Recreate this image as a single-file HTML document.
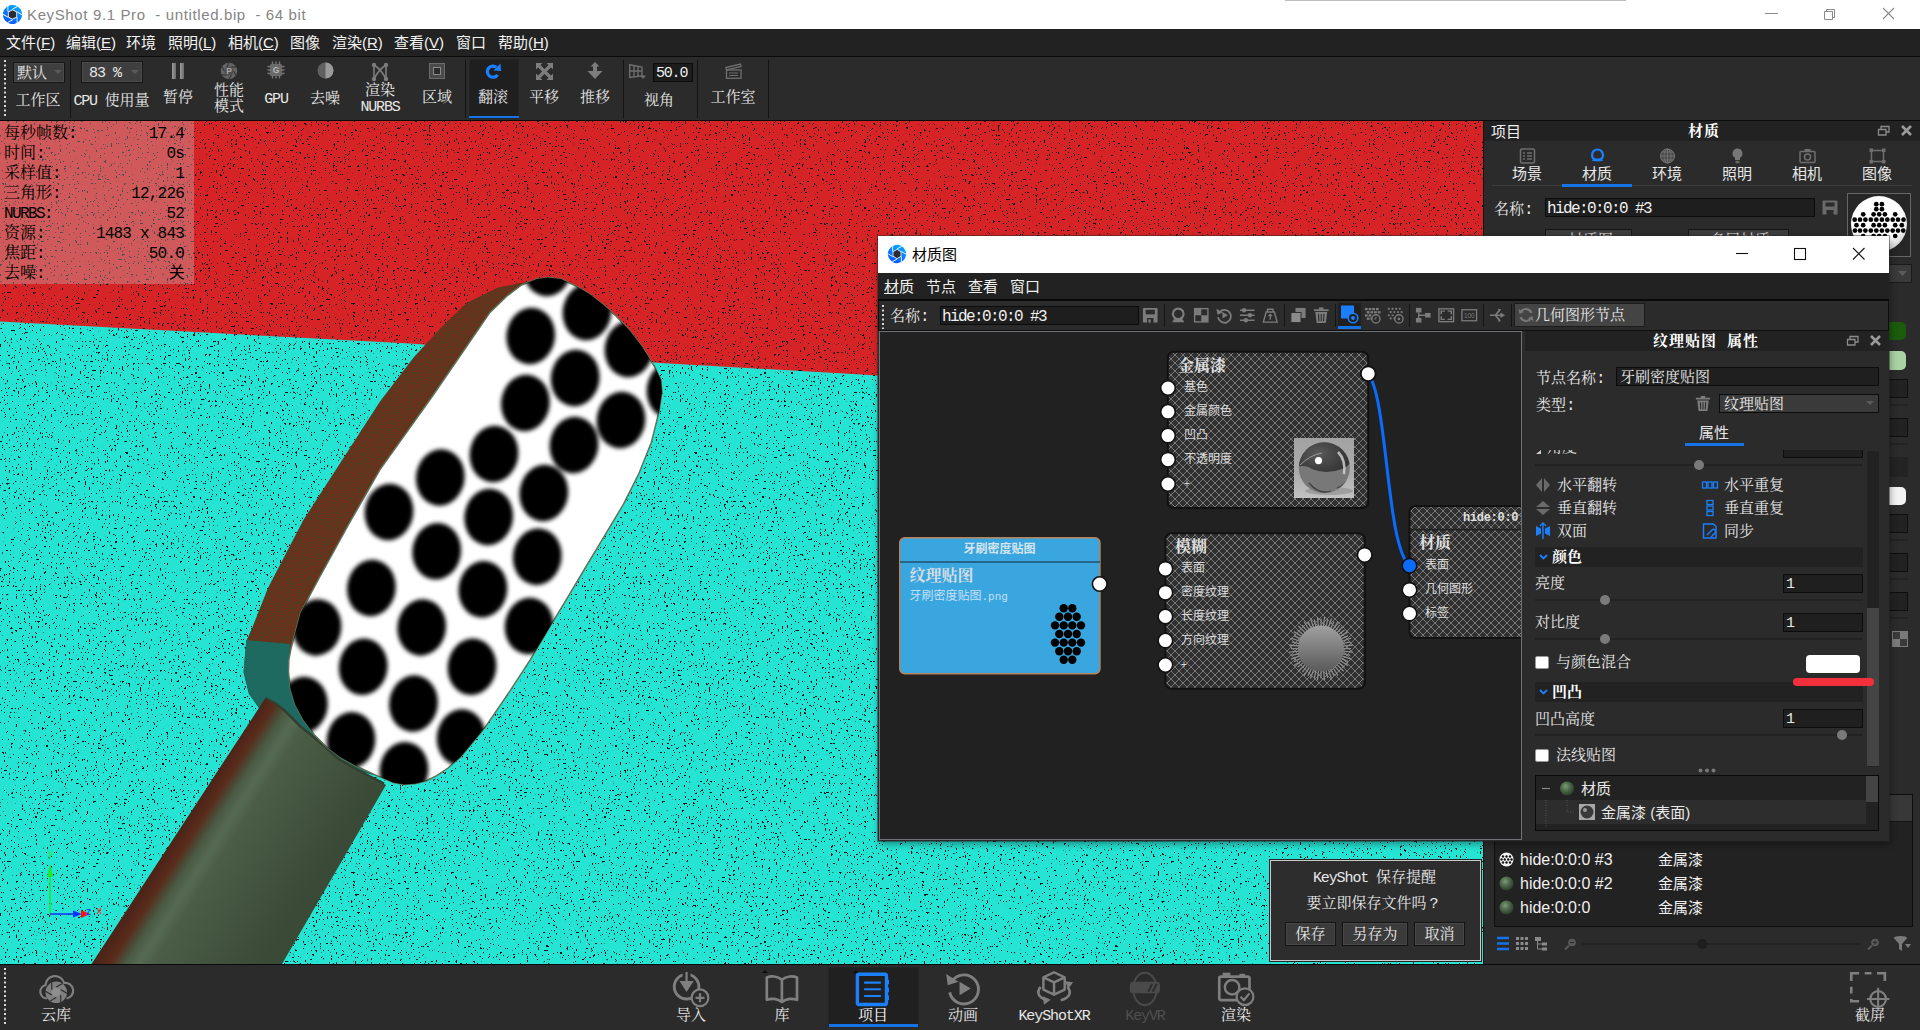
<!DOCTYPE html>
<html lang="zh-CN">
<head>
<meta charset="utf-8">
<title>KeyShot 9.1 Pro - untitled.bip - 64 bit</title>
<style>
*{box-sizing:border-box;margin:0;padding:0}
html,body{width:1920px;height:1030px;overflow:hidden;background:#2b2b2b}
body{position:relative;font-family:"Liberation Sans","Noto Sans CJK SC",sans-serif;font-size:15px;color:#e6e6e6;line-height:1}
.abs{position:absolute}
.ss{font-family:"Liberation Mono","Noto Serif CJK SC",serif}
.yh{font-family:"Liberation Sans","Noto Sans CJK SC",sans-serif}
.t{position:absolute;white-space:pre;line-height:1}
.t.ss{margin-top:2px}
.t.mono{margin-top:1px}
.mono{font-family:"Liberation Mono","Noto Sans CJK SC",monospace;letter-spacing:-1.6px;font-size:16px}
svg{position:absolute;overflow:visible}
/* title bar */
#titlebar{left:0;top:0;width:1920px;height:29px;background:#fff}
#menubar{left:0;top:29px;width:1920px;height:27px;background:#222}
#menubar .t{top:6px;font-size:15px;color:#f2f2f2}
#toolbar{left:0;top:56px;width:1920px;height:65px;background:#2b2b2b;border-top:1px solid #0a0a0a;border-bottom:1px solid #0a0a0a}
.tsep{position:absolute;width:1px;background:#141414;top:3px;height:58px}
.tlbl{position:absolute;margin-top:2px;font-size:15px;color:#e8e8e8;white-space:pre;line-height:16px;text-align:center;transform:translateX(-50%)}
.combo{position:absolute;background:#3f3f3f;border:1px solid #161616;box-shadow:inset 0 0 0 1px #4a4a4a}
/* viewport */
#viewport{left:0;top:121px;width:1483px;height:843px;background:#25e3d3;overflow:hidden}
</style>
</head>
<body>
<!-- ===== TITLE BAR ===== -->
<div id="titlebar" class="abs">
  <svg style="left:1.500px;top:3.500px" width="21" height="21" viewBox="0 0 21 21"><defs><linearGradient id="lgva" x1="0" y1="0" x2="0" y2="1"><stop offset="0" stop-color="#08a6ff"/><stop offset="1" stop-color="#0458ff"/></linearGradient></defs><defs><radialGradient id="lg1"><stop offset="0" stop-color="#08a6ff"/></radialGradient></defs><g transform="translate(10.5 10.5) rotate(30)"><circle r="9.6" fill="url(#lgva)"/><polygon points="5.30,0.00 2.65,4.59 -2.65,4.59 -5.30,0.00 -2.65,-4.59 2.65,-4.59" fill="#f4f8ff"/><path d="M5.30 0.00L8.19 5.01M2.65 4.59L-0.24 9.60M-2.65 4.59L-8.43 4.59M-5.30 0.00L-8.19 -5.01M-2.65 -4.59L0.24 -9.60M2.65 -4.59L8.43 -4.59" stroke="#f4f8ff" stroke-width="0.9" fill="none"/><polygon points="4.35,0.00 2.17,3.76 -2.17,3.76 -4.35,0.00 -2.17,-3.76 2.17,-3.76" fill="#2c2c30"/></g></svg>
  <div class="t" style="left:27px;top:7px;font-size:15px;color:#858585;letter-spacing:0.63px">KeyShot 9.1 Pro  - untitled.bip  - 64 bit</div>
  <div class="abs" style="left:1285px;top:0;width:341px;height:1px;background:#bdbdbd"></div>
  <svg style="left:1760px;top:4px" width="150" height="22" viewBox="0 0 150 22" fill="none" stroke="#8a8a8a" stroke-width="1">
    <path d="M5 9.5H18"/>
    <path d="M64.5 7.5h8v8h-8z M66.5 7.5v-2h8v8h-2"/>
    <path d="M123 4L134 15M134 4L123 15" stroke-width="1.1"/>
  </svg>
</div>

<!-- ===== MENU BAR ===== -->
<div id="menubar" class="abs">
  <div class="t" style="left:6px">文件(<u>F</u>)</div>
  <div class="t" style="left:66px">编辑(<u>E</u>)</div>
  <div class="t" style="left:126px">环境</div>
  <div class="t" style="left:168px">照明(<u>L</u>)</div>
  <div class="t" style="left:228px">相机(<u>C</u>)</div>
  <div class="t" style="left:290px">图像</div>
  <div class="t" style="left:332px">渲染(<u>R</u>)</div>
  <div class="t" style="left:394px">查看(<u>V</u>)</div>
  <div class="t" style="left:456px">窗口</div>
  <div class="t" style="left:498px">帮助(<u>H</u>)</div>
</div>

<!-- ===== MAIN TOOLBAR ===== -->
<div id="toolbar" class="abs">

  <svg style="left:3px;top:3px" width="4" height="58"><line x1="2" y1="0" x2="2" y2="58" stroke="#d8d8d8" stroke-width="2" stroke-dasharray="2 2.5"/></svg>
  <div class="combo" style="left:13px;top:5px;width:52px;height:21px"></div>
  <div class="t ss" style="left:17px;top:8px;font-size:15px;color:#e8e8e8">默认</div>
  <svg style="left:54px;top:13px" width="8" height="5"><path d="M0 0h8l-4 4z" fill="#5a5a5a"/></svg>
  <div class="tlbl ss" style="left:38px;top:35px">工作区</div>
  <div class="tsep" style="left:70px"></div>
  <div class="combo" style="left:81px;top:4px;width:62px;height:22px"></div>
  <div class="t mono" style="left:89px;top:8px;font-size:15px;letter-spacing:-1px;color:#e8e8e8">83 %</div>
  <svg style="left:131px;top:13px" width="8" height="5"><path d="M0 0h8l-4 4z" fill="#5a5a5a"/></svg>
  <div class="tlbl ss" style="left:111.5px;top:35px"><span class="mono" style="font-size:15px;letter-spacing:-1.2px">CPU </span>使用量</div>

  <svg style="left:172px;top:6px" width="13" height="17"><defs><linearGradient id="gp" x1="0" x2="1"><stop offset="0" stop-color="#9a9a9a"/><stop offset="1" stop-color="#6a6a6a"/></linearGradient></defs><rect x="0" y="0" width="4" height="16" fill="url(#gp)"/><rect x="8" y="0" width="4" height="16" fill="url(#gp)"/></svg>
  <div class="tlbl ss" style="left:178px;top:32px">暂停</div>

  <svg style="left:220px;top:5px" width="18" height="18" viewBox="0 0 18 18"><circle cx="9" cy="9" r="8.3" fill="#646464"/><path d="M13.60 9.00L16.09 13.31M11.30 12.98L8.81 17.30M6.70 12.98L1.72 12.98M4.40 9.00L1.91 4.69M6.70 5.02L9.19 0.70M11.30 5.02L16.28 5.02" stroke="#2b2b2b" stroke-width="1" fill="none"/><circle cx="9" cy="9" r="4.600" fill="#4e4e4e"/><text x="9" y="12.300" font-size="8.500" font-weight="bold" text-anchor="middle" fill="#a8a8a8" font-family="Liberation Sans,sans-serif">P</text></svg>
  <div class="tlbl ss" style="left:229px;top:25px">性能<br>模式</div>

  <svg style="left:267px;top:4px" width="18" height="18" viewBox="0 0 18 18"><rect x="3" y="3" width="12" height="12" rx="1.500" fill="#6a6a6a"/><path d="M5.5 0.5v3M9 0.5v3M12.500 0.5v3M5.5 14.500v3M9 14.500v3M12.500 14.500v3M0.5 5.5h3M0.5 9h3M0.5 12.500h3M14.500 5.500h3M14.500 9h3M14.500 12.500h3" stroke="#777" stroke-width="1.4"/><text x="9" y="12.300" font-size="8.500" font-weight="bold" text-anchor="middle" fill="#b4b4b4" font-family="Liberation Sans,sans-serif">G</text></svg>
  <div class="tlbl mono" style="left:276px;top:33px;font-size:15px;letter-spacing:-1.2px">GPU</div>

  <svg style="left:317px;top:5px" width="17" height="17" viewBox="0 0 17 17"><circle cx="8.500" cy="8.500" r="8" fill="#606060"/><path d="M8.500 0.500a8 8 0 0 1 0 16z" fill="#9a9a9a"/></svg>
  <div class="tlbl ss" style="left:325px;top:33px">去噪</div>

  <svg style="left:371px;top:5px" width="18" height="20" viewBox="0 0 18 20" fill="none" stroke="#7d7d7d" stroke-width="1.6"><path d="M3 3v14M15 3v14M3 3c5 3 10 10 12 14M15 3c-5 3 -10 10 -12 14"/><g fill="#7d7d7d" stroke="none"><circle cx="3" cy="3" r="2.200"/><circle cx="15" cy="3" r="2.200"/><circle cx="3" cy="17" r="2.200"/><circle cx="15" cy="17" r="2.200"/></g></svg>
  <div class="tlbl ss" style="left:380px;top:25px">渲染<br><span class="mono" style="font-size:15px;letter-spacing:-1.2px">NURBS</span></div>

  <svg style="left:429px;top:6px" width="16" height="16" viewBox="0 0 16 16"><rect x="0.500" y="0.500" width="15" height="15" fill="#4a4a4a" stroke="#6a6a6a"/><rect x="4.500" y="4.500" width="7" height="7" fill="#2b2b2b" stroke="#8a8a8a"/></svg>
  <div class="tlbl ss" style="left:437px;top:32px">区域</div>

  <div class="tsep" style="left:465px"></div>
  <div class="abs" style="left:469px;top:2px;width:50px;height:60px;background:#1f1f1f;border:1px solid #242424"></div>
  <div class="abs" style="left:469px;top:59px;width:50px;height:2px;background:#1473e6"></div>
  <svg style="left:484px;top:6px" width="18" height="18" viewBox="0 0 18 18"><path d="M13.600 11.800A5.600 5.600 0 1 1 12.400 4.200" fill="none" stroke="#1a80ff" stroke-width="3.200"/><path d="M9.500 7.500l7.500 0.500l-0.500-7.500z" fill="#1a80ff"/></svg>
  <div class="tlbl ss" style="left:493px;top:32px">翻滚</div>

  <svg style="left:536px;top:6px" width="17" height="17" viewBox="0 0 17 17"><path d="M3 3L14 14M14 3L3 14" stroke="#7d7d7d" stroke-width="3.200"/><path d="M0 0h6.500L0 6.500zM17 0h-6.500L17 6.500zM0 17h6.500L0 10.500zM17 17h-6.500L17 10.500z" fill="#7d7d7d"/></svg>
  <div class="tlbl ss" style="left:544px;top:32px">平移</div>

  <svg style="left:586px;top:5px" width="18" height="18" viewBox="0 0 18 18"><path d="M9 0L13.500 4.500H11V9h5.500L9 17L1.500 9H7V4.500H4.500z" fill="#7d7d7d"/></svg>
  <div class="tlbl ss" style="left:595px;top:32px">推移</div>

  <div class="tsep" style="left:623px"></div>
  <svg style="left:629px;top:7px" width="17" height="15" viewBox="0 0 17 15" fill="none" stroke="#6e6e6e" stroke-width="1.400"><path d="M0.700 0.700L13 3V12L0.700 13.500zM0.700 7H13M5 1.500V13M9 2.300V12.500"/><path d="M11 11.500h6l-3 3.500z" fill="#6e6e6e" stroke="none"/></svg>
  <div class="abs" style="left:653px;top:6px;width:40px;height:19px;background:#1c1c1c;border:1px solid #0c0c0c"></div>
  <div class="t mono" style="left:656px;top:8px;font-size:15px;letter-spacing:-1.200px;color:#f0f0f0">50.0</div>
  <div class="tlbl ss" style="left:659px;top:35px">视角</div>
  <div class="tsep" style="left:697px"></div>

  <svg style="left:725px;top:6px" width="17" height="16" viewBox="0 0 17 16" fill="none" stroke="#6e6e6e" stroke-width="1.300"><path d="M1 4.500L15.500 1L16 3.500L1.500 7z"/><rect x="1.500" y="7" width="14.500" height="8.300"/><path d="M4 10h9M4 12.500h9" stroke-width="1"/></svg>
  <div class="tlbl ss" style="left:733px;top:32px">工作室</div>
  <div class="tsep" style="left:768px"></div>

</div>

<!-- ===== VIEWPORT ===== -->
<div id="viewport" class="abs">

<svg style="left:0;top:0" width="1483" height="843" viewBox="0 0 1483 843">
 <defs>
  <filter id="noise" x="0" y="0" width="100%" height="100%" color-interpolation-filters="sRGB">
   <feTurbulence type="fractalNoise" baseFrequency="0.45" numOctaves="2" seed="7" result="n"/>
   <feColorMatrix in="n" type="matrix" values="0 0 0 0 0.06  0 0 0 0 0.08  0 0 0 0 0.08  0 0 0 -34 10.5"/>
  </filter>
  <filter id="noise2" x="0" y="0" width="100%" height="100%" color-interpolation-filters="sRGB">
   <feTurbulence type="fractalNoise" baseFrequency="0.8" numOctaves="1" seed="3" result="n"/>
   <feColorMatrix in="n" type="matrix" values="0 0 0 0 0.15  0 0 0 0 0.32  0 0 0 0 0.12  0 0 0 -20 9.2"/>
  </filter>
  <filter id="blur2"><feGaussianBlur stdDeviation="2.1"/></filter>
  <clipPath id="faceclip"><polygon points="521.5,164.0 537.0,158.0 548.0,156.5 561.0,158.0 575.0,164.5 589.6,173.0 603.0,183.5 616.0,195.0 630.0,210.0 642.0,225.5 655.0,246.4 661.0,259.0 662.0,271.0 659.2,290.0 651.4,321.2 639.0,352.3 623.4,383.3 604.8,414.4 586.1,445.5 567.5,476.6 548.8,507.7 530.2,538.8 510.0,569.9 485.6,605.7 461.0,635.6 448.0,647.0 436.7,654.6 426.0,660.0 415.0,662.8 404.0,663.5 393.0,661.4 376.8,654.6 357.0,645.5 340.0,636.0 326.0,625.5 314.3,613.8 303.5,599.0 295.3,584.0 290.5,568.0 288.5,551.3 288.8,539.0 291.2,526.8 300.7,491.5 319.7,456.0 349.6,401.7 380.0,348.6 432.4,275.3 490.0,191.4 507.0,175.0"/></clipPath>
  <clipPath id="sideclip"><polygon points="548.0,156.5 498.0,166.5 466.5,182.0 443.0,204.5 414.0,236.0 380.0,280.5 303.4,399.0 268.0,467.0 251.8,507.8 246.3,520.0 243.6,551.3 249.0,573.0 262.0,591.0 300.0,624.0 340.0,644.0 376.8,654.6 340.0,636.0 314.3,613.8 295.3,584.0 288.5,551.3 291.2,526.8 300.7,491.5 319.7,456.0 349.6,401.7 380.0,348.6 432.4,275.3 490.0,191.4 521.5,164.0"/></clipPath>
  <linearGradient id="handleg" gradientUnits="userSpaceOnUse" x1="180.700" y1="711" x2="298.700" y2="786">
   <stop offset="0" stop-color="#4d2418"/><stop offset="0.08" stop-color="#5a2c1c"/><stop offset="0.13" stop-color="#4c4632"/><stop offset="0.17" stop-color="#4a5a44"/><stop offset="0.25" stop-color="#566a52"/><stop offset="0.34" stop-color="#4c5d47"/><stop offset="0.6" stop-color="#445540"/><stop offset="1" stop-color="#3b4937"/>
  </linearGradient>
 </defs>
 <!-- background planes -->
 <rect x="0" y="0" width="1483" height="843" fill="#26e4d4"/>
 <polygon points="0,0 1483,0 1483,290 878,254.500 660,242 410,222.500 0,200.500" fill="#d62426"/>
 <rect x="0" y="0" width="1483" height="843" filter="url(#noise)"/>
 <!-- head side -->
 <polygon points="548.0,156.5 498.0,166.5 466.5,182.0 443.0,204.5 414.0,236.0 380.0,280.5 303.4,399.0 268.0,467.0 251.8,507.8 246.3,520.0 243.6,551.3 249.0,573.0 262.0,591.0 300.0,624.0 340.0,644.0 376.8,654.6 340.0,636.0 314.3,613.8 295.3,584.0 288.5,551.3 291.2,526.8 300.7,491.5 319.7,456.0 349.6,401.7 380.0,348.6 432.4,275.3 490.0,191.4 521.5,164.0" fill="#6e301d"/>
 <g clip-path="url(#sideclip)"><rect x="230" y="150" width="330" height="520" filter="url(#noise2)" opacity="0.55"/></g>
 <polygon points="246.3,519.0 290.0,523.0 288.5,551.3 295.3,584.0 314.3,613.8 340.0,636.0 376.8,654.6 340.0,647.0 300.0,626.0 262.0,591.0 249.0,573.0 243.6,551.3" fill="#1f6a60"/>
 <!-- handle -->
 <polygon points="265.4,577 275,582 284.4,589.3 300.7,605.7 314.3,616.5 338.8,638.3 360.5,650.5 382.3,661.4 386,664 282,843 91.500,843" fill="url(#handleg)"/>
 <path d="M265.4 577L275 582L284.4 589.3L300.7 605.7L314.3 616.5L338.8 638.3L360.5 650.5L384 662.500" fill="none" stroke="#33402f" stroke-width="2.500"/>
 <!-- face -->
 <polygon points="521.5,164.0 537.0,158.0 548.0,156.5 561.0,158.0 575.0,164.5 589.6,173.0 603.0,183.5 616.0,195.0 630.0,210.0 642.0,225.5 655.0,246.4 661.0,259.0 662.0,271.0 659.2,290.0 651.4,321.2 639.0,352.3 623.4,383.3 604.8,414.4 586.1,445.5 567.5,476.6 548.8,507.7 530.2,538.8 510.0,569.9 485.6,605.7 461.0,635.6 448.0,647.0 436.7,654.6 426.0,660.0 415.0,662.8 404.0,663.5 393.0,661.4 376.8,654.6 357.0,645.5 340.0,636.0 326.0,625.5 314.3,613.8 303.5,599.0 295.3,584.0 290.5,568.0 288.5,551.3 288.8,539.0 291.2,526.8 300.7,491.5 319.7,456.0 349.6,401.7 380.0,348.6 432.4,275.3 490.0,191.4 507.0,175.0" fill="#ffffff" stroke="#5d735a" stroke-width="1.500" stroke-linejoin="round"/>
 <g clip-path="url(#faceclip)"><g filter="url(#blur2)" fill="#000">
 <ellipse cx="547.7" cy="147.0" rx="24.3" ry="28.3" transform="rotate(8 547.7 147.0)"/>
<ellipse cx="587.0" cy="191.0" rx="24.3" ry="28.3" transform="rotate(8 587.0 191.0)"/>
<ellipse cx="530.7" cy="215.0" rx="24.3" ry="28.3" transform="rotate(8 530.7 215.0)"/>
<ellipse cx="629.0" cy="228.0" rx="24.3" ry="28.3" transform="rotate(8 629.0 228.0)"/>
<ellipse cx="575.2" cy="257.0" rx="24.3" ry="28.3" transform="rotate(8 575.2 257.0)"/>
<ellipse cx="671.0" cy="269.0" rx="24.3" ry="28.3" transform="rotate(8 671.0 269.0)"/>
<ellipse cx="525.4" cy="282.0" rx="24.3" ry="28.3" transform="rotate(8 525.4 282.0)"/>
<ellipse cx="621.0" cy="299.0" rx="24.3" ry="28.3" transform="rotate(8 621.0 299.0)"/>
<ellipse cx="574.0" cy="324.0" rx="24.3" ry="28.3" transform="rotate(8 574.0 324.0)"/>
<ellipse cx="494.0" cy="333.0" rx="24.3" ry="28.3" transform="rotate(8 494.0 333.0)"/>
<ellipse cx="440.3" cy="356.5" rx="24.3" ry="28.3" transform="rotate(8 440.3 356.5)"/>
<ellipse cx="543.8" cy="372.0" rx="24.3" ry="28.3" transform="rotate(8 543.8 372.0)"/>
<ellipse cx="488.7" cy="396.0" rx="24.3" ry="28.3" transform="rotate(8 488.7 396.0)"/>
<ellipse cx="389.0" cy="391.0" rx="24.3" ry="28.3" transform="rotate(8 389.0 391.0)"/>
<ellipse cx="436.7" cy="430.3" rx="24.3" ry="28.3" transform="rotate(8 436.7 430.3)"/>
<ellipse cx="537.3" cy="435.7" rx="24.3" ry="28.3" transform="rotate(8 537.3 435.7)"/>
<ellipse cx="371.4" cy="467.0" rx="24.3" ry="28.3" transform="rotate(8 371.4 467.0)"/>
<ellipse cx="482.9" cy="468.3" rx="24.3" ry="28.3" transform="rotate(8 482.9 468.3)"/>
<ellipse cx="317.0" cy="506.4" rx="24.3" ry="28.3" transform="rotate(8 317.0 506.4)"/>
<ellipse cx="421.7" cy="506.4" rx="24.3" ry="28.3" transform="rotate(8 421.7 506.4)"/>
<ellipse cx="529.1" cy="505.0" rx="24.3" ry="28.3" transform="rotate(8 529.1 505.0)"/>
<ellipse cx="363.2" cy="545.8" rx="24.3" ry="28.3" transform="rotate(8 363.2 545.8)"/>
<ellipse cx="472.0" cy="545.8" rx="24.3" ry="28.3" transform="rotate(8 472.0 545.8)"/>
<ellipse cx="303.4" cy="584.0" rx="24.3" ry="28.3" transform="rotate(8 303.4 584.0)"/>
<ellipse cx="413.5" cy="582.5" rx="24.3" ry="28.3" transform="rotate(8 413.5 582.5)"/>
<ellipse cx="351.0" cy="619.3" rx="24.3" ry="28.3" transform="rotate(8 351.0 619.3)"/>
<ellipse cx="461.1" cy="616.5" rx="24.3" ry="28.3" transform="rotate(8 461.1 616.5)"/>
<ellipse cx="404.0" cy="649.2" rx="24.3" ry="28.3" transform="rotate(8 404.0 649.2)"/>
 </g></g>
</svg>

<div class="abs" style="left:0;top:0;width:194px;height:163px;background:rgba(195,205,205,0.32)"></div>
<div class="t ss" style="left:4px;top:3px;font-size:16px;color:#000">每秒帧数<span class="mono">:</span></div><div class="t mono ss" style="right:1299px;top:4px;letter-spacing:-0.8px;color:#000">17.4</div>
<div class="t ss" style="left:4px;top:23px;font-size:16px;color:#000">时间<span class="mono">:</span></div><div class="t mono ss" style="right:1299px;top:24px;letter-spacing:-0.8px;color:#000">0s</div>
<div class="t ss" style="left:4px;top:43px;font-size:16px;color:#000">采样值<span class="mono">:</span></div><div class="t mono ss" style="right:1299px;top:44px;letter-spacing:-0.8px;color:#000">1</div>
<div class="t ss" style="left:4px;top:63px;font-size:16px;color:#000">三角形<span class="mono">:</span></div><div class="t mono ss" style="right:1299px;top:64px;letter-spacing:-0.8px;color:#000">12,226</div>
<div class="t ss" style="left:4px;top:83px;font-size:16px;color:#000"><span class="mono">NURBS:</span></div><div class="t mono ss" style="right:1299px;top:84px;letter-spacing:-0.8px;color:#000">52</div>
<div class="t ss" style="left:4px;top:103px;font-size:16px;color:#000">资源<span class="mono">:</span></div><div class="t mono ss" style="right:1299px;top:104px;letter-spacing:-0.8px;color:#000">1483 x 843</div>
<div class="t ss" style="left:4px;top:123px;font-size:16px;color:#000">焦距<span class="mono">:</span></div><div class="t mono ss" style="right:1299px;top:124px;letter-spacing:-0.8px;color:#000">50.0</div>
<div class="t ss" style="left:4px;top:143px;font-size:16px;color:#000">去噪<span class="mono">:</span></div><div class="t mono ss" style="right:1299px;top:144px;letter-spacing:-0.8px;color:#000">关</div>

<svg style="left:40px;top:725px" width="70" height="80" viewBox="40 725 70 80">
 <path d="M50 793V755" stroke="#22e822" stroke-width="1.500"/><path d="M50 743l-3 13h6z" fill="#22e822"/>
 <path d="M50 793H76" stroke="#1030ff" stroke-width="1.500"/><path d="M82 793l-9-3.500v7z" fill="#1030ff"/><path d="M90 793l-9-4v8z" fill="#ff1010"/>
 <text x="48" y="736" font-size="10" fill="#22e822" font-family="Liberation Sans,sans-serif">y</text>
 <text x="86" y="794" font-size="10" fill="#1030ff" font-family="Liberation Sans,sans-serif">z</text>
 <text x="96.500" y="793" font-size="11" fill="#ff2020" font-family="Liberation Sans,sans-serif">x</text>
</svg>

</div>


<div id="rpanel" class="abs" style="left:1483px;top:121px;width:437px;height:843px;background:#2b2b2b;border-left:1px solid #111;overflow:hidden">
  <div class="abs" style="left:0;top:0;width:437px;height:20px;background:#222"></div>
  <div class="t yh" style="left:7px;top:3px;font-size:15px;color:#f0f0f0">项目</div>
  <div class="t ss" style="left:204px;top:2px;font-size:15px;font-weight:bold;color:#fff;letter-spacing:1px">材质</div>
  <svg style="left:393px;top:3px" width="38" height="14" viewBox="0 0 38 14"><path d="M1.500 5.500h7.500v5.500h-7.500zM4 5V2.500h8v5.500h-2.500" fill="none" stroke="#8a8a8a" stroke-width="1.300"/><path d="M25 2l9 9M34 2l-9 9" stroke="#9a9a9a" stroke-width="2.600"/></svg>
  <svg style="left:34.5px;top:27px" width="17" height="16" viewBox="0 0 17 16"><rect x="1.500" y="1" width="14" height="14" rx="1.500" fill="none" stroke="#6f6f6f" stroke-width="1.500"/><path d="M4 5h2M8 5h5M4 8h2M8 8h5M4 11h2M8 11h5" stroke="#6f6f6f" stroke-width="1.500"/></svg><div class="t yh" style="left:28px;top:45px;font-size:15px;color:#e8e8e8">场景</div>
<svg style="left:104.5px;top:27px" width="17" height="16" viewBox="0 0 17 16"><circle cx="8.500" cy="7" r="5.500" fill="none" stroke="#1a80ff" stroke-width="2.200"/><path d="M3 13q1-3 3-2.500h5q2-0.500 3 2.500z" fill="#1a80ff"/></svg><div class="t yh" style="left:98px;top:45px;font-size:15px;color:#e8e8e8">材质</div>
<svg style="left:174.5px;top:27px" width="17" height="16" viewBox="0 0 17 16"><circle cx="8.500" cy="8" r="7" fill="#4a4a4a" stroke="#777" stroke-width="1"/><path d="M1.500 8h14M8.500 1v14M3 4h11M3 12h11" stroke="#777" stroke-width="0.800" fill="none"/><ellipse cx="8.500" cy="8" rx="3.500" ry="7" fill="none" stroke="#777" stroke-width="0.800"/></svg><div class="t yh" style="left:168px;top:45px;font-size:15px;color:#e8e8e8">环境</div>
<svg style="left:244.5px;top:27px" width="17" height="16" viewBox="0 0 17 16"><path d="M8.500 0.500a5 5 0 0 1 2.500 9.300V12h-5V9.800A5 5 0 0 1 8.500 0.500z" fill="#777"/><rect x="6.500" y="12.800" width="4" height="2.500" fill="#666"/></svg><div class="t yh" style="left:238px;top:45px;font-size:15px;color:#e8e8e8">照明</div>
<svg style="left:314.5px;top:27px" width="17" height="16" viewBox="0 0 17 16"><rect x="1" y="3.500" width="15" height="11" rx="1" fill="none" stroke="#6f6f6f" stroke-width="1.500"/><rect x="5.500" y="1" width="6" height="2.500" fill="#6f6f6f"/><circle cx="8.500" cy="9" r="3" fill="none" stroke="#6f6f6f" stroke-width="1.500"/></svg><div class="t yh" style="left:308px;top:45px;font-size:15px;color:#e8e8e8">相机</div>
<svg style="left:384.5px;top:27px" width="17" height="16" viewBox="0 0 17 16"><rect x="2.500" y="2.500" width="12" height="11" fill="none" stroke="#6f6f6f" stroke-width="1.500"/><g fill="#6f6f6f"><rect x="0.500" y="0.500" width="3.500" height="3.500"/><rect x="13" y="0.500" width="3.500" height="3.500"/><rect x="0.500" y="12" width="3.500" height="3.500"/><rect x="13" y="12" width="3.500" height="3.500"/></g></svg><div class="t yh" style="left:378px;top:45px;font-size:15px;color:#e8e8e8">图像</div>

  <div class="abs" style="left:8px;top:64px;width:420px;height:1px;background:#3c3c3c"></div>
  <div class="abs" style="left:78px;top:63px;width:70px;height:3px;background:#1473e6"></div>
  <div class="t ss" style="left:10px;top:79px;font-size:15px;color:#e8e8e8">名称<span class="mono">:</span></div>
  <div class="abs" style="left:61px;top:77px;width:270px;height:19px;background:#1e1e1e;border:1px solid #0c0c0c"></div>
  <div class="t mono" style="left:63px;top:79px;color:#f0f0f0">hide:0:0:0 #3</div>
  <svg style="left:338px;top:79px" width="16" height="15" viewBox="0 0 16 15"><path d="M1.500 0.500h13a1 1 0 0 1 1 1V14.500h-4V10H4.500v4.500h-4V1.500a1 1 0 0 1 1-1z" fill="#6a6a6a"/><rect x="3.500" y="2.500" width="9" height="4" fill="#2b2b2b"/></svg>
  <div class="abs" style="left:363px;top:72px;width:64px;height:64px;background:#262626;border:1px solid #666"></div>
  <svg style="left:365.800px;top:73.800px" width="58" height="58" viewBox="-29 -29 58 58"><defs><clipPath id="sphc"><circle r="28"/></clipPath><radialGradient id="sphg" cx="0.450" cy="0.400" r="0.650"><stop offset="0.700" stop-color="#fff"/><stop offset="1" stop-color="#c8c8c8"/></radialGradient></defs><circle r="28" fill="url(#sphg)"/><g clip-path="url(#sphc)" fill="#000"><circle cx="-2.7" cy="-19.8" r="2.350"/><circle cx="2.9" cy="-19.8" r="2.350"/><circle cx="-2.7" cy="-14.8" r="2.350"/><circle cx="2.9" cy="-14.8" r="2.350"/><circle cx="-15.8" cy="-9.7" r="2.350"/><circle cx="-5.4" cy="-9.7" r="2.350"/><circle cx="0.2" cy="-9.7" r="2.350"/><circle cx="5.9" cy="-9.7" r="2.350"/><circle cx="16.2" cy="-9.7" r="2.350"/><circle cx="-19.0" cy="-4.3" r="2.350"/><circle cx="-13.6" cy="-4.3" r="2.350"/><circle cx="-8.2" cy="-4.3" r="2.350"/><circle cx="-2.7" cy="-4.3" r="2.350"/><circle cx="2.9" cy="-4.3" r="2.350"/><circle cx="8.3" cy="-4.3" r="2.350"/><circle cx="13.7" cy="-4.3" r="2.350"/><circle cx="19.0" cy="-4.3" r="2.350"/><circle cx="-24.3" cy="-4.3" r="2.350"/><circle cx="24.5" cy="-4.3" r="2.350"/><circle cx="-15.8" cy="1.2" r="2.350"/><circle cx="-5.4" cy="1.2" r="2.350"/><circle cx="0.2" cy="1.2" r="2.350"/><circle cx="5.9" cy="1.2" r="2.350"/><circle cx="16.2" cy="1.2" r="2.350"/><circle cx="-22.5" cy="1.2" r="2.350"/><circle cx="22.8" cy="1.2" r="2.350"/><circle cx="-19.0" cy="6.6" r="2.350"/><circle cx="-13.6" cy="6.6" r="2.350"/><circle cx="-8.2" cy="6.6" r="2.350"/><circle cx="-2.7" cy="6.6" r="2.350"/><circle cx="2.9" cy="6.6" r="2.350"/><circle cx="8.3" cy="6.6" r="2.350"/><circle cx="13.7" cy="6.6" r="2.350"/><circle cx="19.0" cy="6.6" r="2.350"/><circle cx="-24.0" cy="6.6" r="2.350"/><circle cx="24.2" cy="6.6" r="2.350"/><circle cx="-15.8" cy="12.0" r="2.350"/><circle cx="-5.4" cy="12.0" r="2.350"/><circle cx="0.2" cy="12.0" r="2.350"/><circle cx="5.9" cy="12.0" r="2.350"/><circle cx="16.2" cy="12.0" r="2.350"/><circle cx="-2.7" cy="17.4" r="2.350"/><circle cx="2.9" cy="17.4" r="2.350"/><circle cx="-2.7" cy="22.4" r="2.350"/><circle cx="2.9" cy="22.4" r="2.350"/></g></svg>
  <div class="abs" style="left:61px;top:108px;width:87px;height:22px;background:#3c3c3c;border:1px solid #151515"></div>
  <div class="abs" style="left:204px;top:108px;width:101px;height:22px;background:#3c3c3c;border:1px solid #151515"></div>
  <div class="t ss" style="left:84px;top:111px;font-size:15px;color:#ddd">材质图</div>
  <div class="t ss" style="left:226px;top:111px;font-size:15px;color:#ddd">多层材质</div>
  <!-- right strip visible beside graph window -->
  <div class="abs" style="left:400px;top:143px;width:28px;height:19px;background:#3a3a3a;border:1px solid #1a1a1a"></div>
  <svg style="left:414px;top:150px" width="9" height="5"><path d="M0 0h9l-4.500 5z" fill="#5a5a5a"/></svg>
  <div class="abs" style="left:396px;top:201px;width:26px;height:18px;background:#1b5c0c;border-radius:5px"></div>
  <div class="abs" style="left:396px;top:230px;width:26px;height:19px;background:#a9d3a2;border-radius:5px"></div>
  <div class="abs" style="left:396px;top:258px;width:28px;height:19px;background:#222;border:1px solid #0e0e0e"></div>
  <div class="abs" style="left:396px;top:283px;width:28px;height:2px;background:#232323"></div>
  <div class="abs" style="left:396px;top:297px;width:28px;height:19px;background:#222;border:1px solid #0e0e0e"></div>
  <div class="abs" style="left:396px;top:322px;width:28px;height:2px;background:#232323"></div>
  <div class="abs" style="left:396px;top:336px;width:28px;height:20px;background:#232323"></div>
  <div class="abs" style="left:396px;top:366px;width:26px;height:18px;background:#f2f2f2;border-radius:5px"></div>
  <div class="abs" style="left:396px;top:393px;width:28px;height:19px;background:#222;border:1px solid #0e0e0e"></div>
  <div class="abs" style="left:396px;top:418px;width:28px;height:2px;background:#232323"></div>
  <div class="abs" style="left:396px;top:432px;width:28px;height:19px;background:#222;border:1px solid #0e0e0e"></div>
  <div class="abs" style="left:396px;top:457px;width:28px;height:2px;background:#232323"></div>
  <div class="abs" style="left:396px;top:471px;width:28px;height:19px;background:#222;border:1px solid #0e0e0e"></div>
  <div class="abs" style="left:396px;top:496px;width:28px;height:2px;background:#232323"></div>
  <svg style="left:408px;top:510px" width="16" height="16" viewBox="0 0 16 16"><rect width="16" height="16" fill="#7a7a7a"/><rect x="1" y="1" width="7" height="7" fill="#3a3a3a"/><rect x="8" y="8" width="7" height="7" fill="#3a3a3a"/></svg>
  <!-- materials list -->
  <div class="abs" style="left:10px;top:673px;width:419px;height:133px;background:#222;border:1px solid #0e0e0e"></div>
  <div class="abs" style="left:11px;top:674px;width:417px;height:27px;background:#383838;border-bottom:1px solid #161616"></div>
  <svg style="left:15px;top:731px" width="16" height="64" viewBox="0 0 16 64"><defs><radialGradient id="gsph" cx="0.400" cy="0.350" r="0.700"><stop offset="0" stop-color="#7d9a78"/><stop offset="0.500" stop-color="#4a6446"/><stop offset="1" stop-color="#2a3828"/></radialGradient></defs>
    <circle cx="7.500" cy="7.500" r="7" fill="#f4f4f4"/><g fill="#111"><circle cx="4" cy="4.500" r="1.200"/><circle cx="7.500" cy="4.500" r="1.200"/><circle cx="11" cy="4.500" r="1.200"/><circle cx="2.500" cy="7.500" r="1.200"/><circle cx="5.800" cy="7.500" r="1.200"/><circle cx="9.200" cy="7.500" r="1.200"/><circle cx="12.500" cy="7.500" r="1.200"/><circle cx="4" cy="10.500" r="1.200"/><circle cx="7.500" cy="10.500" r="1.200"/><circle cx="11" cy="10.500" r="1.200"/></g>
    <circle cx="7.500" cy="31.500" r="7" fill="url(#gsph)"/><circle cx="7.500" cy="55.500" r="7" fill="url(#gsph)"/></svg>
  <div class="t yh" style="left:36px;top:730px;font-size:16px;color:#f0f0f0;margin-top:1px">hide:0:0:0 #3</div>
  <div class="t yh" style="left:36px;top:754px;font-size:16px;color:#f0f0f0;margin-top:1px">hide:0:0:0 #2</div>
  <div class="t yh" style="left:36px;top:778px;font-size:16px;color:#f0f0f0;margin-top:1px">hide:0:0:0</div>
  <div class="t yh" style="left:174px;top:731px;font-size:15px;color:#f0f0f0">金属漆</div>
  <div class="t yh" style="left:174px;top:755px;font-size:15px;color:#f0f0f0">金属漆</div>
  <div class="t yh" style="left:174px;top:779px;font-size:15px;color:#f0f0f0">金属漆</div>
  <!-- bottom icon row -->
  <svg style="left:12px;top:814px" width="420" height="18" viewBox="0 0 420 18">
    <path d="M1 3h12M1 8.500h12M1 14h12" stroke="#1473e6" stroke-width="2.600"/>
    <g fill="#8a8a8a"><rect x="20" y="2" width="3" height="3"/><rect x="24.500" y="2" width="3" height="3"/><rect x="29" y="2" width="3" height="3"/><rect x="20" y="7" width="3" height="3"/><rect x="24.500" y="7" width="3" height="3"/><rect x="29" y="7" width="3" height="3"/><rect x="20" y="12" width="3" height="3"/><rect x="24.500" y="12" width="3" height="3"/><rect x="29" y="12" width="3" height="3"/></g>
    <g fill="#8a8a8a"><rect x="39" y="2" width="6" height="4"/><rect x="46" y="7.500" width="5" height="3"/><rect x="46" y="12.500" width="5" height="3"/><path d="M41.500 6v8h4.500M41.500 9h4.500" stroke="#8a8a8a" fill="none"/></g>
    <circle cx="76" cy="7.500" r="3.800" fill="#5a5a5a"/><path d="M73 10.500l-4 4" stroke="#5a5a5a" stroke-width="2"/><path d="M74 7.500h4" stroke="#2b2b2b" stroke-width="1.200"/>
    <path d="M86 9H365" stroke="#222" stroke-width="1.500"/><circle cx="206.500" cy="9" r="5" fill="#1e1e1e"/>
    <circle cx="379" cy="7.500" r="3.800" fill="#5a5a5a"/><path d="M376 10.500l-4 4" stroke="#5a5a5a" stroke-width="2"/><path d="M377 7.500h4M379 5.500v4" stroke="#2b2b2b" stroke-width="1.200"/>
    <path d="M398 3h13l-5 6v7l-3-2v-5z" fill="#7a7a7a"/><ellipse cx="404.500" cy="3" rx="6.500" ry="2" fill="#7a7a7a"/><path d="M409 9h6l-3 4z" fill="#7a7a7a"/>
  </svg>
</div>


<div id="bottombar" class="abs" style="left:0;top:964px;width:1920px;height:66px;background:#2b2b2b;border-top:1px solid #0a0a0a">
  <svg style="left:3px;top:3px" width="4" height="58"><line x1="2" y1="0" x2="2" y2="58" stroke="#d8d8d8" stroke-width="2" stroke-dasharray="2 2.500"/></svg>
  <div class="abs" style="left:828px;top:2px;width:91px;height:60px;background:#202020;border:1px solid #242424"></div>
  <svg style="left:762px;top:5px" width="100" height="4"><path d="M0 3l3-3l3 3zM91 3l3-3l3 3z" fill="#0a0a0a"/></svg>
  <div class="abs" style="left:829px;top:59px;width:89px;height:3px;background:#1473e6"></div>
  <svg style="left:38px;top:8px" width="37" height="32" viewBox="38 973 37 32"><path d="M47 998.500a6.800 6.800 0 0 1-1.500-13.400a9.500 9.500 0 0 1 18.600-2.200a6.600 6.600 0 0 1 2.400 15.600" fill="none" stroke="#7f7f7f" stroke-width="2.200"/><circle cx="56.25" cy="992.3" r="10.8" fill="#7f7f7f"/><path d="M60.75 994.90L60.75 1002.12M56.25 997.50L50.00 1001.11M51.75 994.90L45.50 991.29M51.75 989.70L51.75 982.48M56.25 987.10L62.50 983.49M60.75 989.70L67.00 993.31" stroke="#2b2b2b" stroke-width="1.100" fill="none"/><circle cx="56.25" cy="992.3" r="4.300" fill="#8e8e8e"/></svg>
<div class="tlbl ss" style="left:56px;top:44px;color:#e8e8e8;margin-top:0">云库</div>
<svg style="left:672.0px;top:6.2px" width="38.1" height="35.8" viewBox="0 0 34 32"><circle cx="13" cy="14" r="11" fill="none" stroke="#7f7f7f" stroke-width="2.600"/><path d="M13 0v13" stroke="#2b2b2b" stroke-width="7"/><path d="M13 1v9h4.500l-4.500 7l-4.500-7H13" fill="#7f7f7f" stroke="#7f7f7f" stroke-width="2"/><circle cx="25" cy="24" r="7.500" fill="#2b2b2b" stroke="#7f7f7f" stroke-width="2"/><path d="M21 24h8M25 20v8" stroke="#7f7f7f" stroke-width="2"/></svg>
<div class="tlbl ss" style="left:691px;top:44px;color:#e8e8e8;margin-top:0">导入</div>
<svg style="left:764.1px;top:8.4px" width="35.8" height="33.6" viewBox="0 0 32 30"><path d="M16 6C12 2.500 6 2.500 2.500 4v20c3.500-1.500 9.500-1.500 13.500 2c4-3.500 10-3.500 13.500-2V4C26 2.500 20 2.500 16 6zM16 6v20" fill="none" stroke="#7f7f7f" stroke-width="2.400" stroke-linejoin="round"/></svg>
<div class="tlbl ss" style="left:782px;top:44px;color:#e8e8e8;margin-top:0">库</div>
<svg style="left:854.0px;top:7.3px" width="38.1" height="34.7" viewBox="0 0 34 31"><rect x="3" y="2" width="26" height="27" rx="1.500" fill="none" stroke="#1a80ff" stroke-width="3"/><path d="M9 9.500h15M9 15.500h15M9 21.500h15" stroke="#1a80ff" stroke-width="1.800"/><path d="M30 7v4M30 14v4M30 21v4" stroke="#1a80ff" stroke-width="2.500"/></svg>
<div class="tlbl ss" style="left:873px;top:44px;color:#ffffff;margin-top:0">项目</div>
<svg style="left:945.1px;top:5.0px" width="35.8" height="37.0" viewBox="0 0 32 33"><path d="M6.500 9.500A13 13 0 1 1 4.200 20" fill="none" stroke="#7f7f7f" stroke-width="2.600"/><path d="M1 3.500l1.500 10l9.500-3z" fill="#7f7f7f"/><path d="M13 10.500v12l10-6z" fill="#7f7f7f"/></svg>
<div class="tlbl ss" style="left:963px;top:44px;color:#e8e8e8;margin-top:0">动画</div>
<svg style="left:1035.0px;top:5.0px" width="38.1" height="37.0" viewBox="0 0 34 33"><path d="M17 2l9.500 4.500v11L17 22l-9.500-4.500v-11zM7.500 6.500L17 11l9.500-4.500M17 11v11" fill="none" stroke="#7f7f7f" stroke-width="2.200" stroke-linejoin="round"/><path d="M5 15c-4 5-2 10 6 12M29 15c4 5 2 10-6 12" fill="none" stroke="#7f7f7f" stroke-width="2.400"/><path d="M8 31l6-4.500l-7-3z" fill="#7f7f7f"/><path d="M27 10l2.500 7l4.500-6z" fill="#7f7f7f"/></svg>
<div class="tlbl mono" style="left:1054px;top:44px;font-size:15px;letter-spacing:-1.100px;color:#e8e8e8;margin-top:0">KeyShotXR</div>
<svg style="left:1127.1px;top:6.2px" width="35.8" height="35.8" viewBox="0 0 32 32"><ellipse cx="16" cy="16" rx="10.500" ry="14.500" fill="none" stroke="#4a4a4a" stroke-width="1.800"/><rect x="2.500" y="9.500" width="27" height="10.500" rx="3" fill="#4a4a4a"/><path d="M19 18.500l3.500-7M23 18.500l3.500-7" stroke="#2b2b2b" stroke-width="1.600"/></svg>
<div class="tlbl mono" style="left:1145px;top:44px;font-size:15px;letter-spacing:-1.100px;color:#4f4f4f;margin-top:0">KeyVR</div>
<svg style="left:1217.0px;top:6.2px" width="38.1" height="35.8" viewBox="0 0 34 32"><rect x="2" y="5" width="27" height="21" rx="1.500" fill="none" stroke="#7f7f7f" stroke-width="2.400"/><rect x="5" y="1.500" width="7" height="3.500" fill="#7f7f7f"/><rect x="20" y="2.500" width="5" height="2.500" fill="#7f7f7f"/><circle cx="13.500" cy="14.500" r="6.500" fill="none" stroke="#7f7f7f" stroke-width="2.200"/><circle cx="25" cy="23" r="7.500" fill="#2b2b2b" stroke="#7f7f7f" stroke-width="2"/><path d="M21 23l3 3l5-6" fill="none" stroke="#7f7f7f" stroke-width="2"/></svg>
<div class="tlbl ss" style="left:1236px;top:44px;color:#e8e8e8;margin-top:0">渲染</div>
<svg style="left:1848.7px;top:6.0px" width="42.6" height="40.3" viewBox="0 0 38 36"><path d="M2 9V2h7M14 2h6M25 2h7v7M2 14v6M2 25v2h7" fill="none" stroke="#7f7f7f" stroke-width="2.400"/><circle cx="26" cy="25" r="7" fill="none" stroke="#7f7f7f" stroke-width="2"/><path d="M26 15v20M16 25h20" stroke="#7f7f7f" stroke-width="1.800"/></svg>
<div class="tlbl ss" style="left:1870px;top:44px;color:#e8e8e8;margin-top:0">截屏</div>

</div>


<div id="savedlg" class="abs" style="left:1269px;top:859px;width:213px;height:103px;background:#2d2d2d;border:1px solid #262626;box-shadow:inset 0 0 0 1px #c6caca">
  <div class="t ss" style="left:0;width:209px;text-align:center;top:9px;font-size:15px;color:#e8e8e8"><span class="mono" style="font-size:15px;letter-spacing:-1.100px">KeyShot </span>保存提醒</div>
  <div class="t ss" style="left:0;width:205px;text-align:center;top:34.500px;font-size:15px;color:#e8e8e8">要立即保存文件吗<span class="mono" style="font-size:15px;letter-spacing:0;margin-left:3px">?</span></div>
  <div class="abs" style="left:15px;top:62px;width:51px;height:24px;background:#3b3b3b;border:1px solid #141414;box-shadow:inset 0 0 0 1px #474747"></div>
  <div class="abs" style="left:72px;top:62px;width:66px;height:24px;background:#3b3b3b;border:1px solid #141414;box-shadow:inset 0 0 0 1px #474747"></div>
  <div class="abs" style="left:144px;top:62px;width:51px;height:24px;background:#3b3b3b;border:1px solid #141414;box-shadow:inset 0 0 0 1px #474747"></div>
  <div class="t ss" style="left:25.500px;top:65.500px;font-size:15px;color:#e8e8e8">保存</div>
  <div class="t ss" style="left:82.500px;top:65.500px;font-size:15px;color:#e8e8e8">另存为</div>
  <div class="t ss" style="left:154.500px;top:65.500px;font-size:15px;color:#e8e8e8">取消</div>
</div>
</div>


<div id="matgraph" class="abs" style="left:878px;top:236px;width:1011px;height:605px;background:#2b2b2b;box-shadow:0 0 0 1px rgba(40,40,40,0.450),1px 3px 7px 0 rgba(0,0,0,0.400);overflow:hidden">
  <div class="abs" style="left:0;top:0;width:1011px;height:37px;background:#fff"></div>
  <svg style="left:9px;top:8px" width="20" height="20" viewBox="0 0 21 21"><defs><linearGradient id="lgvb" x1="0" y1="0" x2="0" y2="1"><stop offset="0" stop-color="#08a6ff"/><stop offset="1" stop-color="#0458ff"/></linearGradient></defs><g transform="translate(10.5 10.5) rotate(30)"><circle r="9.6" fill="url(#lgvb)"/><polygon points="5.30,0.00 2.65,4.59 -2.65,4.59 -5.30,0.00 -2.65,-4.59 2.65,-4.59" fill="#f4f8ff"/><path d="M5.30 0.00L8.19 5.01M2.65 4.59L-0.24 9.60M-2.65 4.59L-8.43 4.59M-5.30 0.00L-8.19 -5.01M-2.65 -4.59L0.24 -9.60M2.65 -4.59L8.43 -4.59" stroke="#f4f8ff" stroke-width="0.9" fill="none"/><polygon points="4.35,0.00 2.17,3.76 -2.17,3.76 -4.35,0.00 -2.17,-3.76 2.17,-3.76" fill="#2c2c30"/></g></svg>
  <div class="t yh" style="left:34px;top:11px;font-size:15px;color:#000">材质图</div>
  <svg style="left:850px;top:6px" width="150" height="24" viewBox="0 0 150 24" fill="none" stroke="#111" stroke-width="1.100"><path d="M8 11.500h12"/><rect x="66.500" y="6.500" width="11" height="11"/><path d="M125 6l11.500 11.500M136.500 6L125 17.500"/></svg>
  <div class="abs" style="left:0;top:37px;width:1011px;height:28px;background:#222;border-bottom:2px solid #0a0a0a"></div>
  <div class="t yh" style="left:6px;top:43px;font-size:15px;color:#f2f2f2"><u>材</u>质</div>
  <div class="t yh" style="left:48px;top:43px;font-size:15px;color:#f2f2f2">节点</div>
  <div class="t yh" style="left:90px;top:43px;font-size:15px;color:#f2f2f2">查看</div>
  <div class="t yh" style="left:132px;top:43px;font-size:15px;color:#f2f2f2">窗口</div>
  <div class="abs" style="left:0;top:64px;width:1011px;height:31px;border:1px solid #0e0e0e;border-top:none"></div>
  <svg style="left:3px;top:69px" width="4" height="24"><line x1="2" y1="0" x2="2" y2="24" stroke="#d8d8d8" stroke-width="2" stroke-dasharray="2 2.500"/></svg>
  <div class="t ss" style="left:12px;top:71px;font-size:15px;color:#e8e8e8">名称<span class="mono">:</span></div>
  <div class="abs" style="left:62px;top:70px;width:199px;height:19px;background:#1e1e1e;border:1px solid #0c0c0c"></div>
  <div class="t mono" style="left:64px;top:72px;color:#f0f0f0">hide:0:0:0 #3</div>
  <svg style="left:263.75px;top:70.75px" width="16.5" height="16.5" viewBox="0 0 18 18"><path d="M2 1h14a1 1 0 0 1 1 1V17h-4.500V12H5.500v5H1V2a1 1 0 0 1 1-1z" fill="#7c7c7c"/><rect x="4" y="3" width="10" height="5" fill="#2b2b2b"/><rect x="7" y="13.500" width="2.500" height="3.500" fill="#7c7c7c"/></svg>
<svg style="left:291.75px;top:70.75px" width="16.5" height="16.5" viewBox="0 0 18 18"><circle cx="9" cy="7.500" r="5.800" fill="none" stroke="#7c7c7c" stroke-width="2.400"/><path d="M2.500 16.500q1.500-4 4-3.500h5q2.500-0.500 4 3.500z" fill="#7c7c7c"/></svg>
<svg style="left:314.75px;top:70.75px" width="16.5" height="16.5" viewBox="0 0 18 18"><rect x="1" y="1" width="16" height="16" fill="#7c7c7c"/><rect x="2.500" y="9" width="6.500" height="6.500" fill="#2b2b2b"/><rect x="9" y="2.500" width="6.500" height="6.500" fill="#2b2b2b"/></svg>
<svg style="left:337.75px;top:70.75px" width="16.5" height="16.5" viewBox="0 0 18 18"><path d="M4 5.500A7 7 0 1 1 2.300 11" fill="none" stroke="#7c7c7c" stroke-width="2"/><path d="M0.500 2l1 6.500l6-2.500z" fill="#7c7c7c"/><path d="M7 5.500v7l6-3.500z" fill="#7c7c7c"/></svg>
<svg style="left:360.75px;top:70.75px" width="16.5" height="16.5" viewBox="0 0 18 18"><path d="M1 3.500h16M1 9h16M1 14.500h16" stroke="#7c7c7c" stroke-width="1.600"/><circle cx="5.500" cy="3.500" r="2.400" fill="#7c7c7c"/><circle cx="12" cy="9" r="2.400" fill="#7c7c7c"/><circle cx="7.500" cy="14.500" r="2.400" fill="#7c7c7c"/></svg>
<svg style="left:383.75px;top:70.75px" width="16.5" height="16.5" viewBox="0 0 18 18"><path d="M4.500 5.500h9l3 11h-15z" fill="none" stroke="#7c7c7c" stroke-width="1.500"/><path d="M6 5.500v-3h6v3" fill="none" stroke="#7c7c7c" stroke-width="1.500"/><path d="M9 8v6M7 10l2-2l2 2" stroke="#7c7c7c" stroke-width="1.400" fill="none"/></svg>
<svg style="left:411.75px;top:70.75px" width="16.5" height="16.5" viewBox="0 0 18 18"><rect x="6" y="1" width="11" height="11" fill="#7c7c7c"/><rect x="1" y="6" width="11" height="11" fill="#8c8c8c" stroke="#2b2b2b" stroke-width="1"/></svg>
<svg style="left:434.75px;top:70.75px" width="16.5" height="16.5" viewBox="0 0 18 18"><path d="M2.500 5.500h13l-1.500 12h-10z" fill="#7c7c7c"/><path d="M1 3.500h16" stroke="#7c7c7c" stroke-width="2"/><rect x="6.500" y="0.500" width="5" height="2.500" fill="#7c7c7c"/><path d="M6 7.500l0.500 8M9 7.500v8M12 7.500l-0.500 8" stroke="#2b2b2b" stroke-width="1.200"/></svg>
<div class="abs" style="left:460px;top:67px;width:23px;height:26px;background:#202020"></div><div class="abs" style="left:460px;top:90px;width:23px;height:3px;background:#1473e6"></div>
<svg style="left:462.0px;top:69.0px" width="18" height="19" viewBox="0 0 18 19"><rect x="1" y="0.500" width="13" height="13" fill="#1a80ff"/><circle cx="13" cy="13" r="4.800" fill="#202020" stroke="#1a80ff" stroke-width="1.600"/><circle cx="13" cy="13" r="2" fill="#1a80ff"/></svg>
<svg style="left:485.75px;top:70.75px" width="16.5" height="16.5" viewBox="0 0 18 18"><rect x="1" y="1.0" width="3" height="2.500" fill="#7c7c7c"/><rect x="5" y="1.0" width="3" height="2.500" fill="#7c7c7c"/><rect x="9" y="1.0" width="3" height="2.500" fill="#7c7c7c"/><rect x="13" y="1.0" width="3" height="2.500" fill="#7c7c7c"/><rect x="3" y="4.5" width="3" height="2.500" fill="#7c7c7c"/><rect x="7" y="4.5" width="3" height="2.500" fill="#7c7c7c"/><rect x="11" y="4.5" width="3" height="2.500" fill="#7c7c7c"/><rect x="15" y="4.5" width="3" height="2.500" fill="#7c7c7c"/><rect x="1" y="8.0" width="3" height="2.500" fill="#7c7c7c"/><rect x="5" y="8.0" width="3" height="2.500" fill="#7c7c7c"/><rect x="3" y="11.5" width="3" height="2.500" fill="#7c7c7c"/><rect x="7" y="11.5" width="3" height="2.500" fill="#7c7c7c"/><circle cx="13" cy="13" r="4.500" fill="#2b2b2b" stroke="#7c7c7c" stroke-width="1.500"/><path d="M13 10.500v2.500h-2" stroke="#7c7c7c" fill="none"/></svg>
<svg style="left:508.75px;top:70.75px" width="16.5" height="16.5" viewBox="0 0 18 18"><circle cx="2" cy="2.0" r="1.200" fill="#7c7c7c"/><circle cx="6" cy="2.0" r="1.200" fill="#7c7c7c"/><circle cx="10" cy="2.0" r="1.200" fill="#7c7c7c"/><circle cx="14" cy="2.0" r="1.200" fill="#7c7c7c"/><circle cx="4" cy="5.5" r="1.200" fill="#7c7c7c"/><circle cx="8" cy="5.5" r="1.200" fill="#7c7c7c"/><circle cx="12" cy="5.5" r="1.200" fill="#7c7c7c"/><circle cx="16" cy="5.5" r="1.200" fill="#7c7c7c"/><circle cx="2" cy="9.0" r="1.200" fill="#7c7c7c"/><circle cx="6" cy="9.0" r="1.200" fill="#7c7c7c"/><circle cx="4" cy="12.5" r="1.200" fill="#7c7c7c"/><circle cx="8" cy="12.5" r="1.200" fill="#7c7c7c"/><circle cx="13" cy="13" r="4.500" fill="#2b2b2b" stroke="#7c7c7c" stroke-width="1.500"/><circle cx="13" cy="13" r="1.500" fill="#7c7c7c"/></svg>
<svg style="left:536.75px;top:70.75px" width="16.5" height="16.5" viewBox="0 0 18 18"><rect x="1" y="1" width="6" height="5" fill="#7c7c7c"/><rect x="1" y="12" width="6" height="5" fill="#7c7c7c"/><rect x="11" y="6.500" width="6" height="5" fill="#7c7c7c"/><path d="M4 6v6M4 9h7" stroke="#7c7c7c" stroke-width="1.500" fill="none"/></svg>
<svg style="left:559.75px;top:70.75px" width="16.5" height="16.5" viewBox="0 0 18 18"><rect x="1" y="2" width="16" height="14" fill="none" stroke="#7c7c7c" stroke-width="1.500"/><path d="M3.500 8V4.500h4M14.500 8V4.500h-4M3.500 10v3.500h4M14.500 10v3.500h-4" fill="none" stroke="#7c7c7c" stroke-width="1.600"/></svg>
<svg style="left:582.75px;top:70.75px" width="16.5" height="16.5" viewBox="0 0 18 18"><rect x="1" y="3" width="16" height="12" fill="none" stroke="#7c7c7c" stroke-width="1.400"/><text x="9" y="12" font-size="7" text-anchor="middle" fill="#7c7c7c" font-family="Liberation Sans,sans-serif">100</text></svg>
<svg style="left:610.75px;top:70.75px" width="16.5" height="16.5" viewBox="0 0 18 18"><path d="M1 9h12M7 9l4-5M7 9l4 5" stroke="#7c7c7c" stroke-width="1.800" fill="none"/><path d="M12.500 6l5 3l-5 3z" fill="#7c7c7c"/><path d="M9.500 2l3.500 0.500l-1.500 3zM9.500 16l3.500-0.500l-1.500-3z" fill="#7c7c7c"/></svg>
<div class="abs" style="left:286px;top:68px;width:1px;height:23px;background:#151515"></div><div class="abs" style="left:406px;top:68px;width:1px;height:23px;background:#151515"></div><div class="abs" style="left:457px;top:68px;width:1px;height:23px;background:#151515"></div><div class="abs" style="left:531px;top:68px;width:1px;height:23px;background:#151515"></div><div class="abs" style="left:605px;top:68px;width:1px;height:23px;background:#151515"></div><div class="abs" style="left:633px;top:68px;width:1px;height:23px;background:#151515"></div>
  <div class="abs" style="left:636px;top:67px;width:131px;height:24px;background:#444;border:1px solid #1c1c1c"></div>
  <svg style="left:640px;top:71px" width="16" height="16" viewBox="0 0 16 16"><path d="M13.500 6A6 6 0 0 0 3 4.500M2.500 10A6 6 0 0 0 13 11.500" fill="none" stroke="#777" stroke-width="2.200"/><path d="M0.500 2l1 5l4.500-2zM15.500 14l-1-5l-4.500 2z" fill="#777"/></svg>
  <div class="t ss" style="left:657px;top:71px;font-size:15px;color:#e8e8e8">几何图形节点</div>
  
<svg style="left:1px;top:95px" width="643" height="509" viewBox="0 0 643 509">
 <defs>
  <pattern id="hatch" width="8" height="8" patternUnits="userSpaceOnUse"><rect width="8" height="8" fill="#303030"/><path d="M-1 -1L9 9M-1 9L9 -1M-1 7L1 9M7 -1L9 1M-1 1L1 -1M7 9L9 7" stroke="#808080" stroke-width="0.900"/></pattern>
  <clipPath id="cvclip"><rect x="1" y="1" width="641" height="507"/></clipPath>
  <radialGradient id="mball" cx="0.450" cy="0.400" r="0.600"><stop offset="0" stop-color="#8a8a8a"/><stop offset="0.300" stop-color="#4a4a4a"/><stop offset="0.700" stop-color="#303030"/><stop offset="1" stop-color="#6a6a6a"/></radialGradient>
  <linearGradient id="fz" x1="0" y1="0" x2="0" y2="1"><stop offset="0" stop-color="#a0a0a0"/><stop offset="1" stop-color="#5a5a5a"/></linearGradient>
 </defs>
 <rect x="0.500" y="0.500" width="642" height="508" fill="#212121" stroke="#6e7276"/>
 <g clip-path="url(#cvclip)">
  <!-- metal paint node -->
  <rect x="288.8" y="20.7" width="200.400" height="156.300" rx="6" fill="url(#hatch)" stroke="#111" stroke-width="2"/>
  <text x="299.0" y="39.5" font-size="16" fill="#e0e0e0" font-weight="bold" text-anchor="start" font-family="Liberation Serif,Noto Serif CJK SC,serif">金属漆</text>
  <circle cx="289.0" cy="57.0" r="7.300" fill="#fff" stroke="#111" stroke-width="1.600"/><circle cx="289.0" cy="80.8" r="7.300" fill="#fff" stroke="#111" stroke-width="1.600"/><circle cx="289.0" cy="104.6" r="7.300" fill="#fff" stroke="#111" stroke-width="1.600"/><circle cx="289.0" cy="128.7" r="7.300" fill="#fff" stroke="#111" stroke-width="1.600"/><circle cx="289.0" cy="153.0" r="7.300" fill="#fff" stroke="#111" stroke-width="1.600"/>
  <text x="305.0" y="60.0" font-size="12" fill="#dcdcdc" font-weight="normal" text-anchor="start" font-family="Liberation Sans,Noto Sans CJK SC,sans-serif">基色</text><text x="305.0" y="84.0" font-size="12" fill="#dcdcdc" font-weight="normal" text-anchor="start" font-family="Liberation Sans,Noto Sans CJK SC,sans-serif">金属颜色</text><text x="305.0" y="108.0" font-size="12" fill="#dcdcdc" font-weight="normal" text-anchor="start" font-family="Liberation Sans,Noto Sans CJK SC,sans-serif">凹凸</text><text x="305.0" y="132.0" font-size="12" fill="#dcdcdc" font-weight="normal" text-anchor="start" font-family="Liberation Sans,Noto Sans CJK SC,sans-serif">不透明度</text><text x="305.0" y="156.0" font-size="10" fill="#dcdcdc" font-weight="normal" text-anchor="start" font-family="Liberation Sans,Noto Sans CJK SC,sans-serif">+</text>
  <circle cx="489.2" cy="42.7" r="7.300" fill="#fff" stroke="#111" stroke-width="1.600"/>
  <defs><linearGradient id="tbg" x1="0" y1="0" x2="0" y2="1"><stop offset="0" stop-color="#a2a2a2"/><stop offset="0.600" stop-color="#adadad"/><stop offset="1" stop-color="#c2c2c2"/></linearGradient>
  <radialGradient id="mdark" cx="0.400" cy="0.550" r="0.700"><stop offset="0" stop-color="#5a5a5a"/><stop offset="0.600" stop-color="#3c3c3c"/><stop offset="1" stop-color="#2c2c2c"/></radialGradient>
  <clipPath id="ballc"><circle cx="445.300" cy="136.800" r="25.500"/></clipPath></defs>
  <rect x="415" y="107" width="60" height="60" fill="url(#tbg)"/>
  <ellipse cx="450" cy="160" rx="24" ry="4" fill="#8c8c8c" opacity="0.600"/>
  <circle cx="445.300" cy="136.800" r="25.500" fill="#787878"/>
  <g clip-path="url(#ballc)"><path d="M415 136q12-3 18 2q14 6 30 0q8-3 12-12V100H415z" fill="url(#mdark)"/>
  <path d="M459 121q8 8 6 22" stroke="#d8d8d8" stroke-width="2.500" fill="none" opacity="0.800"/>
  <path d="M430 152q10 12 22 8M458 157q8-3 12-10" stroke="#404040" stroke-width="1.300" fill="none"/>
  <path d="M421 134q10-10 22-12" stroke="#9a9a9a" stroke-width="1" fill="none"/></g>
  <circle cx="439.500" cy="129.600" r="3.600" fill="#fff"/>
  <!-- blur node -->
  <rect x="286.4" y="202.2" width="199.300" height="155.600" rx="6" fill="url(#hatch)" stroke="#111" stroke-width="2"/>
  <text x="296.0" y="220.5" font-size="16" fill="#e0e0e0" font-weight="bold" text-anchor="start" font-family="Liberation Serif,Noto Serif CJK SC,serif">模糊</text>
  <circle cx="286.4" cy="237.9" r="7.300" fill="#fff" stroke="#111" stroke-width="1.600"/><circle cx="286.4" cy="261.7" r="7.300" fill="#fff" stroke="#111" stroke-width="1.600"/><circle cx="286.4" cy="285.5" r="7.300" fill="#fff" stroke="#111" stroke-width="1.600"/><circle cx="286.4" cy="309.6" r="7.300" fill="#fff" stroke="#111" stroke-width="1.600"/><circle cx="286.4" cy="334.0" r="7.300" fill="#fff" stroke="#111" stroke-width="1.600"/>
  <text x="302.0" y="241.0" font-size="12" fill="#dcdcdc" font-weight="normal" text-anchor="start" font-family="Liberation Sans,Noto Sans CJK SC,sans-serif">表面</text><text x="302.0" y="265.0" font-size="12" fill="#dcdcdc" font-weight="normal" text-anchor="start" font-family="Liberation Sans,Noto Sans CJK SC,sans-serif">密度纹理</text><text x="302.0" y="289.0" font-size="12" fill="#dcdcdc" font-weight="normal" text-anchor="start" font-family="Liberation Sans,Noto Sans CJK SC,sans-serif">长度纹理</text><text x="302.0" y="313.0" font-size="12" fill="#dcdcdc" font-weight="normal" text-anchor="start" font-family="Liberation Sans,Noto Sans CJK SC,sans-serif">方向纹理</text><text x="302.0" y="337.0" font-size="10" fill="#dcdcdc" font-weight="normal" text-anchor="start" font-family="Liberation Sans,Noto Sans CJK SC,sans-serif">+</text>
  <circle cx="485.7" cy="223.9" r="7.300" fill="#fff" stroke="#111" stroke-width="1.600"/>
  <g transform="translate(442 317.6)"><path d="M22.0 0.0L30.0 0.0M21.9 2.5L31.8 3.6M21.4 4.9L29.2 6.7M20.8 7.3L30.2 10.6M19.8 9.5L27.0 13.0M18.6 11.7L27.1 17.0M17.2 13.7L23.5 18.7M15.6 15.6L22.6 22.6M13.7 17.2L18.7 23.5M11.7 18.6L17.0 27.1M9.5 19.8L13.0 27.0M7.3 20.8L10.6 30.2M4.9 21.4L6.7 29.2M2.5 21.9L3.6 31.8M0.0 22.0L0.0 30.0M-2.5 21.9L-3.6 31.8M-4.9 21.4L-6.7 29.2M-7.3 20.8L-10.6 30.2M-9.5 19.8L-13.0 27.0M-11.7 18.6L-17.0 27.1M-13.7 17.2L-18.7 23.5M-15.6 15.6L-22.6 22.6M-17.2 13.7L-23.5 18.7M-18.6 11.7L-27.1 17.0M-19.8 9.5L-27.0 13.0M-20.8 7.3L-30.2 10.6M-21.4 4.9L-29.2 6.7M-21.9 2.5L-31.8 3.6M-22.0 0.0L-30.0 0.0M-21.9 -2.5L-31.8 -3.6M-21.4 -4.9L-29.2 -6.7M-20.8 -7.3L-30.2 -10.6M-19.8 -9.5L-27.0 -13.0M-18.6 -11.7L-27.1 -17.0M-17.2 -13.7L-23.5 -18.7M-15.6 -15.6L-22.6 -22.6M-13.7 -17.2L-18.7 -23.5M-11.7 -18.6L-17.0 -27.1M-9.5 -19.8L-13.0 -27.0M-7.3 -20.8L-10.6 -30.2M-4.9 -21.4L-6.7 -29.2M-2.5 -21.9L-3.6 -31.8M-0.0 -22.0L-0.0 -30.0M2.5 -21.9L3.6 -31.8M4.9 -21.4L6.7 -29.2M7.3 -20.8L10.6 -30.2M9.5 -19.8L13.0 -27.0M11.7 -18.6L17.0 -27.1M13.7 -17.2L18.7 -23.5M15.6 -15.6L22.6 -22.6M17.2 -13.7L23.5 -18.7M18.6 -11.7L27.1 -17.0M19.8 -9.5L27.0 -13.0M20.8 -7.3L30.2 -10.6M21.4 -4.9L29.2 -6.7M21.9 -2.5L31.8 -3.6" stroke="#8c8c8c" stroke-width="1.300"/><circle r="23" fill="url(#fz)"/></g>
  <!-- texture node -->
  <rect x="20.7" y="206.8" width="200.300" height="136" rx="5" fill="#3aa6e0" stroke="#b8835a" stroke-width="1.400"/>
  <path d="M21 231H221" stroke="#1f4f70" stroke-width="1.600"/>
  <text x="120.4" y="221.5" font-size="12" fill="#d8e4ec" font-weight="bold" text-anchor="middle" font-family="Liberation Sans,Noto Sans CJK SC,sans-serif">牙刷密度贴图</text>
  <text x="30.5" y="249.5" font-size="16" fill="#d4dde4" font-weight="bold" text-anchor="start" font-family="Liberation Serif,Noto Serif CJK SC,serif">纹理贴图</text>
  <text x="30.5" y="269.0" font-size="12" fill="#c4e0f4" font-weight="normal" text-anchor="start" font-family="Liberation Sans,Noto Sans CJK SC,sans-serif">牙刷密度贴图<tspan font-family="Liberation Mono,monospace" font-size="11">.png</tspan></text>
  <circle cx="220.7" cy="253.0" r="7.300" fill="#fff" stroke="#111" stroke-width="1.600"/>
  <g transform="translate(189 303)" fill="#000"><circle cx="-4.3" cy="-25.8" r="4.200"/><circle cx="4.3" cy="-25.8" r="4.200"/><circle cx="-8.7" cy="-17.2" r="4.200"/><circle cx="0.0" cy="-17.2" r="4.200"/><circle cx="8.7" cy="-17.2" r="4.200"/><circle cx="-13.0" cy="-8.6" r="4.200"/><circle cx="-4.3" cy="-8.6" r="4.200"/><circle cx="4.3" cy="-8.6" r="4.200"/><circle cx="13.0" cy="-8.6" r="4.200"/><circle cx="-8.7" cy="0.0" r="4.200"/><circle cx="0.0" cy="0.0" r="4.200"/><circle cx="8.7" cy="0.0" r="4.200"/><circle cx="-13.0" cy="8.6" r="4.200"/><circle cx="-4.3" cy="8.6" r="4.200"/><circle cx="4.3" cy="8.6" r="4.200"/><circle cx="13.0" cy="8.6" r="4.200"/><circle cx="-8.7" cy="17.2" r="4.200"/><circle cx="0.0" cy="17.2" r="4.200"/><circle cx="8.7" cy="17.2" r="4.200"/><circle cx="-4.3" cy="25.8" r="4.200"/><circle cx="4.3" cy="25.8" r="4.200"/></g>
  <!-- material node -->
  <rect x="530.5" y="175.0" width="200" height="132" rx="6" fill="url(#hatch)" stroke="#111" stroke-width="2"/>
  <path d="M531 198.6H651" stroke="#222" stroke-width="1.600"/>
  <text x="584.0" y="190.0" font-size="12" fill="#e0e0e0" font-weight="bold" text-anchor="start" font-family="Liberation Mono,monospace" letter-spacing="-0.3">hide:0:0:0 #3</text>
  <text x="540.0" y="217.0" font-size="16" fill="#e0e0e0" font-weight="bold" text-anchor="start" font-family="Liberation Serif,Noto Serif CJK SC,serif">材质</text>
  <text x="546.0" y="238.0" font-size="12" fill="#dcdcdc" font-weight="normal" text-anchor="start" font-family="Liberation Sans,Noto Sans CJK SC,sans-serif">表面</text><text x="546.0" y="262.0" font-size="12" fill="#dcdcdc" font-weight="normal" text-anchor="start" font-family="Liberation Sans,Noto Sans CJK SC,sans-serif">几何图形</text><text x="546.0" y="286.0" font-size="12" fill="#dcdcdc" font-weight="normal" text-anchor="start" font-family="Liberation Sans,Noto Sans CJK SC,sans-serif">标签</text>
  <path d="M489.2 42.7C509 69 507 214 530.5 234.7" fill="none" stroke="#0a6cff" stroke-width="3"/>
  <circle cx="489.2" cy="42.7" r="7.300" fill="#fff" stroke="#111" stroke-width="1.600"/>
  <circle cx="530.5" cy="234.7" r="7.300" fill="#0a6cff" stroke="#111" stroke-width="1.600"/><circle cx="530.5" cy="258.9" r="7.300" fill="#fff" stroke="#111" stroke-width="1.600"/><circle cx="530.5" cy="282.6" r="7.300" fill="#fff" stroke="#111" stroke-width="1.600"/>
 </g>
</svg>

  <div class="abs" style="left:647px;top:95px;width:364px;height:20px;background:#222"></div><div class="t ss" style="left:775px;top:97px;font-size:15px;color:#fff;font-weight:bold;letter-spacing:1px">纹理贴图 属性</div>
<svg style="left:968px;top:98px" width="38" height="14" viewBox="0 0 38 14"><path d="M1.500 5.500h7.500v5.500h-7.500zM4 5V2.500h8v5.500h-2.500" fill="none" stroke="#8a8a8a" stroke-width="1.300"/><path d="M25 2l9 9M34 2l-9 9" stroke="#9a9a9a" stroke-width="2.600"/></svg><div class="t ss" style="left:658px;top:133px;font-size:15px;color:#e8e8e8;">节点名称<span class="mono">:</span></div>
<div class="abs" style="left:738px;top:131px;width:263px;height:19px;background:#1f1f1f;border:1px solid #0c0c0c"></div>
<div class="t ss" style="left:742px;top:133px;font-size:15px;color:#e8e8e8;">牙刷密度贴图</div>
<div class="t ss" style="left:658px;top:160px;font-size:15px;color:#e8e8e8;">类型<span class="mono">:</span></div>
<svg style="left:817px;top:159px" width="16" height="17" viewBox="0 0 18 18"><path d="M2.500 5.500h13l-1.500 12h-10z" fill="#7c7c7c"/><path d="M1 3.500h16" stroke="#7c7c7c" stroke-width="2"/><rect x="6.500" y="0.500" width="5" height="2.500" fill="#7c7c7c"/><path d="M6 7.500l0.500 8M9 7.500v8M12 7.500l-0.500 8" stroke="#2b2b2b" stroke-width="1.200"/></svg><div class="abs" style="left:841px;top:158px;width:160px;height:19px;background:#3a3a3a;border:1px solid #0c0c0c"></div>
<div class="t ss" style="left:846px;top:160px;font-size:15px;color:#e8e8e8;">纹理贴图</div>
<svg style="left:988px;top:165px" width="8" height="5"><path d="M0 0h8l-4 4z" fill="#5a5a5a"/></svg><div class="t yh" style="left:821px;top:189px;font-size:15px;color:#e8e8e8;">属性</div>
<div class="abs" style="left:807px;top:207px;width:59px;height:3px;background:#1473e6"></div><div class="abs" style="left:989px;top:215px;width:12px;height:316px;background:#222"></div><div class="abs" style="left:989px;top:372px;width:12px;height:158px;background:#444"></div><div class="abs" style="left:905px;top:214px;width:80px;height:8px;background:#1f1f1f;border:1px solid #0c0c0c;border-top:none"></div><div class="abs" style="left:657px;top:214px;width:60px;height:6px;overflow:hidden"><div class="t ss" style="left:12px;top:-11px;font-size:15px;color:#e8e8e8">角度</div><svg style="left:1px;top:0" width="6" height="5"><path d="M0 4l5-4v4z" fill="#ccc"/></svg></div><div class="abs" style="left:657px;top:228px;width:328px;height:2px;background:#222"></div><div class="abs" style="left:816px;top:224px;width:10px;height:10px;border-radius:5px;background:#7a7a7a"></div>
<svg style="left:657px;top:241px" width="16" height="16" viewBox="0 0 16 16"><path d="M7 1v14l-6-7zM9 1v14l6-7z" fill="#6a6a6a"/></svg><div class="t ss" style="left:679px;top:241px;font-size:15px;color:#e8e8e8;">水平翻转</div>
<svg style="left:824px;top:241px" width="16" height="16" viewBox="0 0 16 16"><rect x="0.500" y="5" width="4" height="6" fill="none" stroke="#1a80ff" stroke-width="1.300"/><rect x="6" y="5" width="4" height="6" fill="none" stroke="#1a80ff" stroke-width="1.300"/><rect x="11.500" y="5" width="4" height="6" fill="none" stroke="#1a80ff" stroke-width="1.300"/></svg><div class="t ss" style="left:846px;top:241px;font-size:15px;color:#e8e8e8;">水平重复</div>
<svg style="left:657px;top:264px" width="16" height="16" viewBox="0 0 16 16"><path d="M1 7h14l-7-6zM1 9h14l-7 6z" fill="#6a6a6a"/></svg><div class="t ss" style="left:679px;top:264px;font-size:15px;color:#e8e8e8;">垂直翻转</div>
<svg style="left:824px;top:264px" width="16" height="16" viewBox="0 0 16 16"><rect x="5" y="0.500" width="6" height="4" fill="none" stroke="#1a80ff" stroke-width="1.300"/><rect x="5" y="6" width="6" height="4" fill="none" stroke="#1a80ff" stroke-width="1.300"/><rect x="5" y="11.500" width="6" height="4" fill="none" stroke="#1a80ff" stroke-width="1.300"/></svg><div class="t ss" style="left:846px;top:264px;font-size:15px;color:#e8e8e8;">垂直重复</div>
<svg style="left:657px;top:287px" width="16" height="16" viewBox="0 0 16 16"><path d="M1 3l5 2.500v5L1 13zM15 3l-5 2.500v5l5 2.500z" fill="#1a80ff"/><path d="M8 0v16M5 3l3-3l3 3" stroke="#1a80ff" stroke-width="1.400" fill="none"/></svg><div class="t ss" style="left:679px;top:287px;font-size:15px;color:#e8e8e8;">双面</div>
<svg style="left:824px;top:287px" width="16" height="16" viewBox="0 0 16 16"><path d="M1.500 1h10l2.500 2.500v11.500h-12.500z" fill="none" stroke="#1a80ff" stroke-width="1.400"/><path d="M5 12l5-5a2 2 0 0 1 3 3l-4 4" stroke="#1a80ff" stroke-width="1.500" fill="none"/></svg><div class="t ss" style="left:846px;top:287px;font-size:15px;color:#e8e8e8;">同步</div>
<div class="abs" style="left:657px;top:311px;width:328px;height:20px;background:#222"></div><svg style="left:661px;top:318px" width="9" height="6"><path d="M1 1l3.500 3.500L8 1" stroke="#1a80ff" stroke-width="1.800" fill="none"/></svg><div class="t ss" style="left:674px;top:313px;font-size:15px;color:#fff;font-weight:bold">颜色</div>
<div class="t ss" style="left:657px;top:339px;font-size:15px;color:#e8e8e8;">亮度</div>
<div class="abs" style="left:905px;top:338px;width:80px;height:19px;background:#1f1f1f;border:1px solid #0c0c0c"></div>
<div class="t mono" style="left:908px;top:340px;font-size:15px;color:#e8e8e8;">1</div>
<div class="abs" style="left:657px;top:363px;width:328px;height:2px;background:#222"></div><div class="abs" style="left:722px;top:359px;width:10px;height:10px;border-radius:5px;background:#7a7a7a"></div>
<div class="t ss" style="left:657px;top:378px;font-size:15px;color:#e8e8e8;">对比度</div>
<div class="abs" style="left:905px;top:377px;width:80px;height:19px;background:#1f1f1f;border:1px solid #0c0c0c"></div>
<div class="t mono" style="left:908px;top:379px;font-size:15px;color:#e8e8e8;">1</div>
<div class="abs" style="left:657px;top:402px;width:328px;height:2px;background:#222"></div><div class="abs" style="left:722px;top:398px;width:10px;height:10px;border-radius:5px;background:#7a7a7a"></div>
<div class="abs" style="left:657px;top:420px;width:14px;height:13px;background:#fff;border:1px solid #999;border-radius:2px"></div><div class="t ss" style="left:678px;top:418px;font-size:15px;color:#e8e8e8;">与颜色混合</div>
<div class="abs" style="left:928px;top:419px;width:54px;height:18px;background:#fff;border-radius:4px"></div><div class="abs" style="left:657px;top:446px;width:328px;height:20px;background:#222"></div><svg style="left:661px;top:453px" width="9" height="6"><path d="M1 1l3.500 3.500L8 1" stroke="#1a80ff" stroke-width="1.800" fill="none"/></svg><div class="t ss" style="left:674px;top:448px;font-size:15px;color:#fff;font-weight:bold">凹凸</div>
<div class="abs" style="left:915px;top:442px;width:81px;height:8px;background:#f2303c;border-radius:4px"></div><div class="t ss" style="left:657px;top:475px;font-size:15px;color:#e8e8e8;">凹凸高度</div>
<div class="abs" style="left:905px;top:473px;width:80px;height:19px;background:#1f1f1f;border:1px solid #0c0c0c"></div>
<div class="t mono" style="left:908px;top:475px;font-size:15px;color:#e8e8e8;">1</div>
<div class="abs" style="left:657px;top:498px;width:328px;height:2px;background:#222"></div><div class="abs" style="left:959px;top:494px;width:10px;height:10px;border-radius:5px;background:#7a7a7a"></div>
<div class="abs" style="left:657px;top:513px;width:14px;height:13px;background:#fff;border:1px solid #999;border-radius:2px"></div><div class="t ss" style="left:678px;top:511px;font-size:15px;color:#e8e8e8;">法线贴图</div>
<svg style="left:820px;top:532px" width="18" height="5"><circle cx="2.500" cy="2.500" r="2" fill="#777"/><circle cx="9" cy="2.500" r="2" fill="#777"/><circle cx="15.500" cy="2.500" r="2" fill="#777"/></svg><div class="abs" style="left:657px;top:539px;width:344px;height:56px;background:#2d2d2d;border:1px solid #0a0a0a;overflow:hidden"><div class="abs" style="left:0;top:0;width:342px;height:24px;background:#222"></div><div class="abs" style="left:330px;top:0;width:12px;height:54px;background:#222"></div><div class="abs" style="left:330px;top:0;width:12px;height:26px;background:#444"></div><div class="abs" style="left:0;top:48px;width:330px;height:6px;background:#222"></div></div><svg style="left:662px;top:542px" width="60" height="50" viewBox="0 0 60 50"><path d="M2 10.500h8" stroke="#888" stroke-width="1.200"/><circle cx="27" cy="10.500" r="7" fill="url(#gsph)"/><path d="M6 22v28M27 22v12h8" stroke="#555" stroke-width="1" stroke-dasharray="1 1.500" fill="none"/><rect x="39" y="26" width="16" height="16" fill="#a8a8a8"/><circle cx="47" cy="34" r="6.500" fill="#3a3a3a"/><circle cx="45" cy="32" r="2" fill="#999"/></svg><div class="t yh" style="left:703px;top:545px;font-size:15px;color:#e8e8e8;">材质</div>
<div class="t yh" style="left:723px;top:569px;font-size:15px;color:#e8e8e8;">金属漆 (表面)</div>

</div>

</body>
</html>
